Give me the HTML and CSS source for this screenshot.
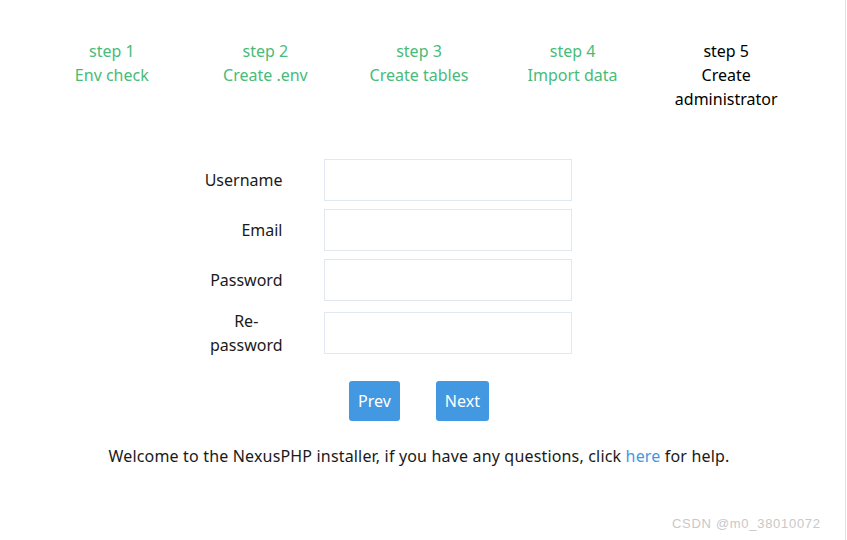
FILE: index.html
```html
<!DOCTYPE html>
<html lang="en">
<head>
    <meta charset="UTF-8">
    <meta name="viewport" content="width=device-width, initial-scale=1.0">
    <title>NexusPHP installer</title>
    <link rel="stylesheet" href="styles.css">
</head>
<body>

    <div class="page">
        <!-- Steps -->
        <div class="steps">
            <div class="step done">step 1<br>Env check</div>
            <div class="step done">step 2<br>Create .env</div>
            <div class="step done">step 3<br>Create tables</div>
            <div class="step done">step 4<br>Import data</div>
            <div class="step current">step 5<br>Create administrator</div>
        </div>

        <!-- Admin form -->
        <form class="form">
            <div class="row">
                <label class="label" for="username"><span>Username</span></label>
                <input class="input" type="text" id="username">
            </div>
            <div class="row">
                <label class="label" for="email"><span>Email</span></label>
                <input class="input" type="text" id="email">
            </div>
            <div class="row">
                <label class="label" for="password"><span>Password</span></label>
                <input class="input" type="password" id="password">
            </div>
            <div class="row">
                <label class="label" for="repassword"><span>Re-password</span></label>
                <input class="input" type="password" id="repassword">
            </div>
            <div class="buttons">
                <button type="button" class="btn">Prev</button>
                <button type="button" class="btn">Next</button>
            </div>
        </form>

        <p class="welcome">Welcome to the NexusPHP installer, if you have any questions, click <a href="#">here</a> for help.</p>
    </div>

    <div class="watermark">CSDN @m0_38010072</div>
    <div class="edge"></div>

</body>
</html>
```

FILE: styles.css
```css
body {
    font-family: "Noto Sans", "Open Sans", sans-serif;
    margin: 0;
    padding: 0;
    background-color: #fff;
    color: #1a1a1a;
    font-size: 16px;
}

.page {
    width: 838px;
    padding-top: 39px;
}

.steps {
    width: 768px;
    margin: 0 auto;
    display: grid;
    grid-template-columns: repeat(5, 1fr);
    text-align: center;
    line-height: 24px;
}

.step.done {
    color: #48bb78;
}

.step.current {
    color: #000;
}

.form {
    margin-top: 48px;
    display: flex;
    flex-direction: column;
    align-items: center;
    gap: 8px;
}

.row {
    display: grid;
    grid-template-columns: 80px 248px;
    column-gap: 41px;
    align-items: center;
    margin-right: 64px;
}

.label {
    text-align: right;
    line-height: 24px;
}

.label span {
    display: inline-block;
    width: min-content;
    text-align: center;
}

.input {
    height: 42px;
    box-sizing: border-box;
    border: 1px solid #e2e8f0;
    border-radius: 0;
    padding: 0 12px;
    font-size: 16px;
    outline: none;
}

.buttons {
    display: flex;
    gap: 36px;
    margin-top: 16px;
}

.btn {
    height: 40px;
    padding: 0 9px;
    background-color: #4299e1;
    color: #fff;
    border: none;
    border-radius: 3px;
    font-family: inherit;
    font-size: 16px;
    cursor: pointer;
}

.welcome {
    margin: 23px 0 0;
    text-align: center;
    line-height: 24px;
    letter-spacing: 0.17px;
}

.welcome a {
    color: #4299e1;
    text-decoration: none;
}

.watermark {
    position: absolute;
    left: 672px;
    top: 516px;
    font-size: 13px;
    letter-spacing: 0.7px;
    color: #c8c8c8;
    font-family: "Liberation Sans", sans-serif;
}

.edge {
    position: fixed;
    top: 0;
    right: 1px;
    width: 1px;
    height: 100%;
    background-color: #d4e2fb;
}
```
